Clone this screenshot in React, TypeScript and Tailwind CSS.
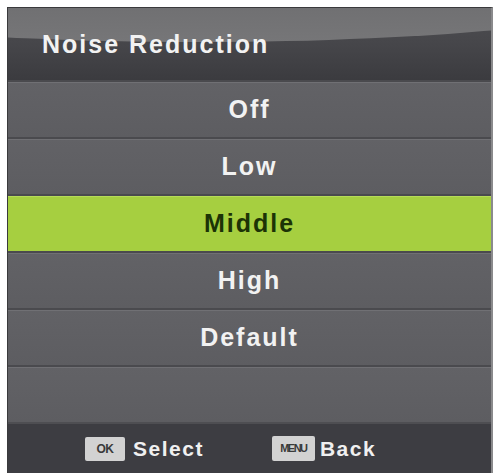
import React from 'react';

const options = ['Off', 'Low', 'Middle', 'High', 'Default', ''];
const selected = 'Middle';

export default function App() {
  return (
    <div
      className="w-[495px] h-[473px] bg-white pt-[7px] pl-[7px] pr-[2px] overflow-hidden"
      style={{ fontFamily: '"Liberation Sans", Arial, sans-serif' }}
    >
      <div className="flex flex-col h-[466px] border-l border-t border-r-2 border-[#3a3a3c] border-r-[#8a8a8c] bg-[#606064]">
        {/* Header */}
        <div className="relative h-[72px] overflow-hidden bg-gradient-to-b from-[#4e4e52] via-[#46464a] to-[#3b3b3f] flex items-center pl-[34px]">
          <div className="absolute left-[-260px] top-[-62px] w-[900px] h-[96px] rounded-[50%] bg-gradient-to-b from-[#5e5e60] via-[#6e6e70] to-[#767678]" />
          <span className="relative text-[25px] font-bold tracking-[2px] text-[#f2f2f2] leading-none mt-[1px]">
            Noise Reduction
          </span>
        </div>

        {/* Options */}
        {options.map((opt, i) => {
          const active = opt === selected;
          return (
            <div
              key={i}
              className={
                active
                  ? 'h-[57px] flex items-center justify-center border-t-2 border-[#4a4a4e] bg-[#a6cf40] shadow-[inset_0_1px_0_#b6dc58]'
                  : 'h-[57px] flex items-center justify-center border-t-2 border-[#4a4a4e] bg-gradient-to-b from-[#626266] to-[#5d5d61] shadow-[inset_0_1px_0_#707074]'
              }
            >
              <span
                className={
                  active
                    ? 'text-[25px] font-bold tracking-[2px] text-[#1c3306] leading-none'
                    : 'text-[25px] font-bold tracking-[2px] text-[#f2f2f2] leading-none'
                }
              >
                {opt}
              </span>
            </div>
          );
        })}

        {/* Footer */}
        <div className="flex-1 flex items-center border-t-2 border-[#4e4e52] bg-[#3d3d42] pl-[77px]">
          <div className="w-[40px] h-[24px] bg-[#d2d2d2] rounded-[2px] flex items-center justify-center">
            <span className="text-[12px] font-bold text-[#3a3a3a] tracking-[-0.5px]">OK</span>
          </div>
          <span className="ml-[8px] text-[21px] font-bold tracking-[1.5px] text-[#f0f0f0] leading-none">
            Select
          </span>
          <div className="ml-[68px] w-[43px] h-[25px] bg-[#d2d2d2] rounded-[2px] flex items-center justify-center">
            <span className="text-[11px] font-bold text-[#3a3a3a] tracking-[-1.5px]">MENU</span>
          </div>
          <span className="ml-[5px] text-[21px] font-bold tracking-[1.5px] text-[#f0f0f0] leading-none">
            Back
          </span>
        </div>
      </div>
    </div>
  );
}
